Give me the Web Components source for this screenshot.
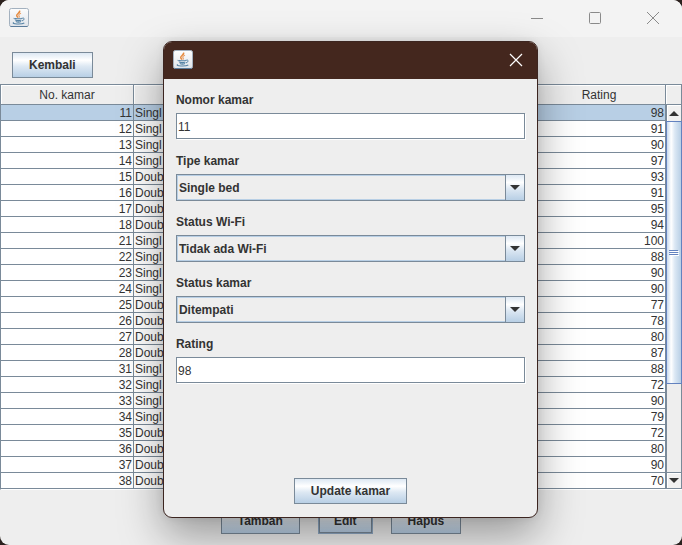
<!DOCTYPE html>
<html lang="id">
<head>
<meta charset="utf-8">
<title>Kamar</title>
<style>
html, body { margin: 0; height: 100%; }
body {
  background: #2b211e;
  color: #333;
  font: 12px/16px "Liberation Sans", Arial, sans-serif;
  --edge: #7a8a99;
  --face: #eeeeee;
  --metal: linear-gradient(#dde8f3 0%, #ffffff 30%, #dde8f3 55%, #b8cfe5 100%);
}
</style>
</head>
<body>
<room-window>
  <metal-button slot="toolbar">Kembali</metal-button>
  <room-table slot="content"></room-table>
  <metal-button slot="actions">Tambah</metal-button>
  <metal-button slot="actions" focused>Edit</metal-button>
  <metal-button slot="actions">Hapus</metal-button>
  <room-dialog slot="dialog">
    <text-field label="Nomor kamar" value="11"></text-field>
    <combo-field label="Tipe kamar" options="Single bed"></combo-field>
    <combo-field label="Status Wi-Fi" options="Tidak ada Wi-Fi"></combo-field>
    <combo-field label="Status kamar" options="Ditempati"></combo-field>
    <text-field label="Rating" value="98"></text-field>
    <metal-button slot="action">Update kamar</metal-button>
  </room-dialog>
</room-window>

<script>
class BaseElement extends HTMLElement {
  connectedCallback() {
    if (this.shadowRoot) return;
    this.attachShadow({ mode: "open" }).innerHTML =
      "<style>*{box-sizing:border-box}</style>" + this.render();
  }
}

customElements.define("java-icon", class extends BaseElement {
  render() {
    return `<style>
      :host { display: block; width: 20px; height: 20px; }
      svg { display: block; }
    </style>
    <svg width="20" height="20" viewBox="0 0 20 20" fill="none" aria-hidden="true">
      <defs><linearGradient id="g" x1="0" y1="0" x2="0" y2="1">
        <stop offset="0" stop-color="#fdfdfd"/><stop offset="1" stop-color="#dfe4ea"/>
      </linearGradient></defs>
      <rect x=".5" y=".5" width="19" height="18" rx="1.8" fill="url(#g)" stroke="#a3b1bf"/>
      <path d="M1.5 18.5h17" stroke="#5b7c9b"/>
      <path d="M10.4 2.6c1.5 1.9-3.1 3-2.7 5 .1.8.9 1.3 1.4 2" stroke="#e58a3e" stroke-width="1.5"/>
      <path d="M12 5.2c-2.3 1-2.6 1.7-1.9 2.6.5.6.2 1.2-.3 1.7" stroke="#e9a068" stroke-width="1.2"/>
      <path d="M5.2 10.2c-1 .8 7.2.8 8.2-.1M6.2 11.9c1.7.8 4.8.7 6.2.1M6.8 13.6c1.4.6 3.8.6 5.2 0" stroke="#5683a5" stroke-width="1.1"/>
      <path d="M13.3 10.2c2.6-.8 2.4 2-.4 2.7" stroke="#5683a5"/>
      <path d="M4.8 14.4c-3.4 1.9 8 2.2 10.5.6" stroke="#5683a5" stroke-width="1.1"/>
    </svg>`;
  }
});

customElements.define("metal-button", class extends BaseElement {
  render() {
    const focus = this.hasAttribute("focused")
      ? "height:24px;padding:0 14px;line-height:22px;box-shadow:0 0 0 1px #8fa9c4;" : "";
    return `<style>
      :host { display: block; }
      button {
        display: block; height: 26px; margin: 0; padding: 0 16px;
        border: 1px solid var(--edge); background: var(--metal);
        color: #333; font: bold 12px/24px "Liberation Sans", Arial, sans-serif; ${focus}
      }
    </style>
    <button type="button"><slot></slot></button>`;
  }
});

customElements.define("text-field", class extends BaseElement {
  render() {
    return `<style>
      :host { display: block; }
      label { display: block; font-weight: bold; line-height: 16px; margin-bottom: 5px; }
      input {
        display: block; width: 100%; height: 26px; padding: 2px 1px 0; border-radius: 0;
        border: 1px solid var(--edge); background: #fff; color: #333; outline: 0;
        box-shadow: 1px 1px #fff;
        font: 12px/16px "Liberation Sans", Arial, sans-serif;
      }
    </style>
    <label for="f">${this.getAttribute("label")}</label>
    <input id="f" type="text" value="${this.getAttribute("value")}">`;
  }
});

customElements.define("combo-field", class extends BaseElement {
  render() {
    const options = this.getAttribute("options").split("|").map(o => `<option>${o}</option>`).join("");
    return `<style>
      :host { display: block; }
      label { display: block; font-weight: bold; line-height: 16px; margin-bottom: 5px; }
      .box { display: grid; grid-template-columns: 1fr 20px; }
      select {
        grid-area: 1 / 1 / 2 / 3; appearance: none; width: 100%; height: 27px;
        margin: 0; padding: 0 2px; border: 1px solid var(--edge); border-radius: 0;
        background: var(--face); color: #333; outline: 0;
        box-shadow: inset 0 0 0 1px #b8cfe5;
        font: bold 12px/16px "Liberation Sans", Arial, sans-serif;
      }
      .arrow {
        grid-area: 1 / 2; display: grid; place-items: center; pointer-events: none;
        border: 1px solid var(--edge); background: var(--metal);
      }
    </style>
    <label for="f">${this.getAttribute("label")}</label>
    <div class="box">
      <select id="f">${options}</select>
      <span class="arrow"><svg width="10" height="5" aria-hidden="true"><path d="M0 0h10L5 5z" fill="#333"/></svg></span>
    </div>`;
  }
});

customElements.define("metal-scrollbar", class extends BaseElement {
  render() {
    return `<style>
      :host { display: flex; flex-direction: column; width: 16px; background: var(--face); border: solid var(--edge); border-width: 0 1px; }
      button { display: grid; place-items: center; flex: 0 0 16px; margin: 0; padding: 0; border: 0; background: #f1f1f1; box-shadow: inset 1px 1px #fff; }
      button:last-child { border-top: 1px solid var(--edge); }
      .track { flex: 1; display: flex; flex-direction: column; }
      .thumb {
        flex: 0 0 75%; display: grid; place-items: center; margin: 0 -1px;
        border: 1px solid #6382bf;
        background: linear-gradient(90deg, #c8daee, #fff 30%, #dce8f4 55%, #b8cfe5);
      }
    </style>
    <button type="button" aria-label="Naik"><svg width="10" height="5"><path d="M0 5h10L5 0z" fill="#333"/></svg></button>
    <div class="track"><div class="thumb"><svg width="10" height="6" shape-rendering="crispEdges"><path d="M0 0h9v1H0zM0 2h9v1H0zM0 4h9v1H0z" fill="#6382bf"/><path d="M1 1h9v1H1zM1 3h9v1H1zM1 5h9v1H1z" fill="#fff"/></svg></div></div>
    <button type="button" aria-label="Turun"><svg width="10" height="5"><path d="M0 0h10L5 5z" fill="#333"/></svg></button>`;
  }
});

customElements.define("room-table", class extends BaseElement {
  render() {
    const S = "Singl", D = "Doub";
    const rooms = [
      [11, S, 98], [12, S, 91], [13, S, 90], [14, S, 97], [15, D, 93], [16, D, 91],
      [17, D, 95], [18, D, 94], [21, S, 100], [22, S, 88], [23, S, 90], [24, S, 90],
      [25, D, 77], [26, D, 78], [27, D, 80], [28, D, 87], [31, S, 88], [32, S, 72],
      [33, S, 90], [34, S, 79], [35, D, 72], [36, D, 80], [37, D, 90], [38, D, 70]
    ];
    const rows = rooms.map(([no, type, rating], i) =>
      `<tr${i ? "" : ' class="selected"'}><td class="num">${no}</td><td>${type}</td><td></td><td></td><td class="num">${rating}</td></tr>`).join("");
    return `<style>
      :host { display: grid; grid-template-columns: 1fr 16px; grid-template-rows: 20px auto; border-top: 1px solid var(--edge); border-left: 1px solid var(--edge); border-bottom: 1px solid #fff; }
      table { grid-area: 1 / 1 / 3 / 2; width: 100%; table-layout: fixed; border-collapse: separate; border-spacing: 0; }
      th, td { border: solid var(--edge); border-width: 0 1px 1px 0; overflow: hidden; white-space: nowrap; }
      th { height: 20px; padding: 2px 1px 0; font-weight: normal; line-height: 17px; background: var(--face); box-shadow: inset 1px 1px #fff; }
      td { height: 16px; padding: 2px 1px 0; line-height: 13px; background: #fff; }
      .num { text-align: right; }
      .selected td { background: #b8cfe5; }
      .corner { border: solid var(--edge); border-width: 0 1px 1px 0; background: var(--face); box-shadow: inset 1px 1px #fff; }
      metal-scrollbar { grid-area: 2 / 2; border-bottom: 1px solid var(--edge); }
    </style>
    <table>
      <thead><tr><th>No. kamar</th><th></th><th></th><th></th><th>Rating</th></tr></thead>
      <tbody>${rows}</tbody>
    </table>
    <div class="corner"></div>
    <metal-scrollbar></metal-scrollbar>`;
  }
});

customElements.define("room-dialog", class extends BaseElement {
  render() {
    return `<style>
      :host {
        display: flex; flex-direction: column; overflow: hidden;
        border: 1px solid #3c2520; border-radius: 9px; background: var(--face);
        box-shadow: 0 18px 44px rgba(0, 0, 0, .36), 0 0 8px rgba(0, 0, 0, .08);
      }
      header { display: flex; justify-content: space-between; align-items: center; height: 37px; padding: 0 14px 2px 9px; background: #44271e; }
      header button { display: block; margin: 0; padding: 0; border: 0; background: none; }
      header svg { display: block; }
      form { flex: 1; display: flex; flex-direction: column; padding: 13px 12px; }
      .fields { flex: 1; display: grid; align-content: start; grid-auto-rows: 61px; }
      .action { display: flex; justify-content: center; }
    </style>
    <header>
      <java-icon></java-icon>
      <button type="button" aria-label="Tutup"><svg width="14" height="14"><path d="M1 1l12 12M13 1L1 13" stroke="#fff" stroke-width="1.2"/></svg></button>
    </header>
    <form>
      <div class="fields"><slot></slot></div>
      <div class="action"><slot name="action"></slot></div>
    </form>`;
  }
});

customElements.define("room-window", class extends BaseElement {
  render() {
    return `<style>
      :host {
        display: flex; flex-direction: column; position: relative; min-height: 100vh; box-sizing: border-box;
        overflow: hidden; border-radius: 9px; background: var(--face);
      }
      header { display: flex; justify-content: space-between; align-items: center; height: 37px; padding: 0 22px 2px 9px; background: #f3f3f3; }
      .controls { display: flex; gap: 44px; }
      .controls button { display: block; margin: 0; padding: 0; border: 0; background: none; }
      .controls svg { display: block; fill: none; stroke: #8a8a8a; }
      .toolbar { display: flex; padding: 15px 12px 6px; }
      .content { flex: 1; }
      footer { display: flex; justify-content: center; align-items: center; gap: 19px; padding: 18px 0 11px; }
      .overlay { position: absolute; inset: 41px 0 27px; display: grid; justify-content: center; grid-template-columns: 55vw; margin-left: 19px; }
    </style>
    <header>
      <java-icon></java-icon>
      <div class="controls">
        <button type="button" aria-label="Kecilkan"><svg width="14" height="14"><path d="M1 7.5h12"/></svg></button>
        <button type="button" aria-label="Besarkan"><svg width="14" height="14"><rect x="1.5" y="1.5" width="11" height="11" rx="1"/></svg></button>
        <button type="button" aria-label="Tutup"><svg width="14" height="14"><path d="M1 1l12 12M13 1L1 13"/></svg></button>
      </div>
    </header>
    <div class="toolbar"><slot name="toolbar"></slot></div>
    <div class="content"><slot name="content"></slot></div>
    <footer><slot name="actions"></slot></footer>
    <div class="overlay"><slot name="dialog"></slot></div>`;
  }
});
</script>
</body>
</html>
